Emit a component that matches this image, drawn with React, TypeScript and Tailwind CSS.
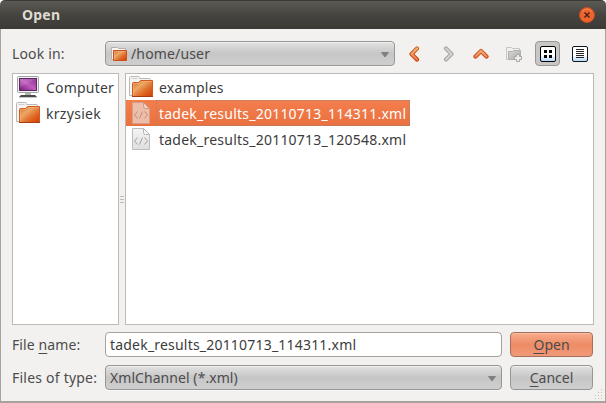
import type { ReactNode } from "react";

function Gradients() {
  return (
    <svg width="0" height="0" className="absolute" aria-hidden="true">
      <defs>
        <linearGradient id="folder" x1="0" y1="0" x2="1" y2="1">
          <stop offset="0" stopColor="#d0661c" />
          <stop offset="0.35" stopColor="#eba868" />
          <stop offset="0.65" stopColor="#e06a26" />
          <stop offset="1" stopColor="#d23c08" />
        </linearGradient>
        <linearGradient id="screen" x1="0" y1="1" x2="1" y2="0">
          <stop offset="0" stopColor="#741a74" />
          <stop offset="0.5" stopColor="#c05cc0" />
          <stop offset="1" stopColor="#8a3490" />
        </linearGradient>
        <linearGradient id="paper" x1="0" y1="0" x2="0" y2="1">
          <stop offset="0" stopColor="#f4f4f4" />
          <stop offset="1" stopColor="#dedede" />
        </linearGradient>
        <linearGradient id="arrow" gradientUnits="userSpaceOnUse" x1="0" y1="0" x2="0" y2="16">
          <stop offset="0" stopColor="#f3c696" />
          <stop offset="1" stopColor="#f0743a" />
        </linearGradient>
        <linearGradient id="arrowEdge" gradientUnits="userSpaceOnUse" x1="0" y1="0" x2="0" y2="16">
          <stop offset="0" stopColor="#cc7030" />
          <stop offset="1" stopColor="#d0340a" />
        </linearGradient>
        <linearGradient id="tile" x1="0" y1="0" x2="0" y2="1">
          <stop offset="0.55" stopColor="#ffffff" />
          <stop offset="1" stopColor="#b4d8fa" />
        </linearGradient>
        <linearGradient id="grayFolder" x1="0" y1="0" x2="1" y2="1">
          <stop offset="0" stopColor="#d8d8d8" />
          <stop offset="1" stopColor="#a8a8a8" />
        </linearGradient>
      </defs>
    </svg>
  );
}

function FolderIcon() {
  return (
    <svg width="24" height="24" viewBox="0 0 24 24" className="shrink-0">
      <path d="M.5 20.500V2.500q0-1 1-1h8q1 0 1 1v1h10q1 0 1 1v16z" fill="#f6f4f2" stroke="#bbb7b3" />
      <path d="M2.500 3.500h6" stroke="#d0cdca" />
      <path d="M3.500 21.500V8.500q0-1 1-1h5l2-2h12v16z" fill="url(#folder)" stroke="#d35a20" />
      <path d="M4.500 20.500V8.500H10l2-2h10.500" fill="none" stroke="#f2b27c" strokeOpacity=".6" />
      <path d="M3 21.500h21" stroke="#a83c12" />
    </svg>
  );
}

function SmallFolderIcon() {
  return (
    <svg width="16" height="16" viewBox="0 0 16 16" className="shrink-0">
      <path d="M.5 13.500V1.500h6l1 1h7v11z" fill="#f6f4f2" stroke="#b5b1ad" />
      <path d="M2.500 14.500v-10h13v10z" fill="url(#folder)" stroke="#c9501c" />
      <path d="M3.500 13.500v-8h11" fill="none" stroke="#f2b27c" strokeOpacity=".6" />
    </svg>
  );
}

function ComputerIcon() {
  return (
    <svg width="24" height="24" viewBox="0 0 24 24" className="shrink-0">
      <rect x="1.500" y="1.500" width="21" height="16" rx="1" fill="#f0f0ee" stroke="#a3a3a0" />
      <rect x="3.500" y="3.500" width="17" height="12" fill="url(#screen)" stroke="#5b2860" />
      <path d="M4 4h16L4 12z" fill="#fff" opacity=".12" />
      <path d="M9 18h6v2H9z" fill="#b4b4b2" />
      <path d="M5 20h14l2 2H3z" fill="#4a4a48" />
      <path d="M3 22.500h18" stroke="#c9c9c7" />
    </svg>
  );
}

function XmlIcon({ selected = false }: { selected?: boolean }) {
  return (
    <svg width="24" height="24" viewBox="0 0 24 24" className="shrink-0">
      <path
        d="M3.500 1.500h11l6 6v15h-17z"
        fill={selected ? "#edbdaa" : "url(#paper)"}
        stroke={selected ? "#d3a08e" : "#bdbdbd"}
      />
      <path
        d="M14.500 1.500v4q0 2 2 2h4z"
        fill={selected ? "#f3cec0" : "#fafafa"}
        stroke={selected ? "#cf9a88" : "#b5b5b5"}
      />
      <path
        d="M8.500 10.500 5.500 14l3 3.500M15.500 10.500l3 3.500-3 3.500M13.500 10.500l-3 7"
        fill="none"
        stroke={selected ? "#c08f80" : "#a3a3a3"}
      />
    </svg>
  );
}

function Chevron({ d, disabled = false }: { d: string; disabled?: boolean }) {
  return (
    <svg width="16" height="16" viewBox="0 0 16 16" fill="none" strokeLinecap="round" strokeLinejoin="round">
      <path d={d} stroke={disabled ? "#a8a8a6" : "url(#arrowEdge)"} strokeWidth="4.200" />
      <path d={d} stroke={disabled ? "#d2d2d0" : "url(#arrow)"} strokeWidth="2" />
    </svg>
  );
}

function NewFolderIcon() {
  return (
    <svg width="16" height="16" viewBox="0 0 16 16">
      <path d="M.5 13.500V1.500h5l1 1h7v11z" fill="#f0f0ef" stroke="#c6c6c4" />
      <path d="M2.500 13.500v-8h4l1-1h7v9z" fill="url(#grayFolder)" stroke="#b0b0ae" />
      <path d="M10.500 8.500h3v2h2v3h-2v2h-3v-2h-2v-3h2z" fill="#ededec" stroke="#a6a6a4" />
    </svg>
  );
}

function GridIcon() {
  return (
    <svg width="16" height="16" viewBox="0 0 16 16">
      <rect x=".5" y=".5" width="15" height="15" rx="1.500" fill="url(#tile)" stroke="#000" />
      <path d="M4 4h3v3H4zM9 4h3v3H9zM4 9h3v3H4zM9 9h3v3H9z" fill="#000" />
    </svg>
  );
}

function ListIcon() {
  return (
    <svg width="16" height="16" viewBox="0 0 16 16">
      <rect x=".5" y=".5" width="15" height="15" rx="1.500" fill="url(#tile)" stroke="#10161c" />
      <path d="M4 3.500h8M4 5.500h8M4 7.500h8M4 9.500h8M4 11.500h8" stroke="#222" />
    </svg>
  );
}

function DropArrow() {
  return (
    <svg width="8" height="6" viewBox="0 0 8 6" className="mt-[3px] ml-auto">
      <path d="M.5.5h7L4 5z" fill="#7f7f7d" stroke="#6a6a68" strokeWidth=".6" />
    </svg>
  );
}

function Combo({ children, className }: { children: ReactNode; className: string }) {
  return (
    <div
      className={`flex h-[25px] items-center rounded-[4px] border border-[#969694] bg-linear-to-b from-[#e2e2e2] via-[#c6c6c6] to-[#cfcfcf] pr-[5px] text-[#4c4c4c] shadow-[inset_0_1px_0_#f0f0f0,0_1px_0_#fafafa] ${className}`}
    >
      {children}
      <DropArrow />
    </div>
  );
}

function Mnemonic({ children }: { children: ReactNode }) {
  return <span className="underline decoration-1 underline-offset-[3px]">{children}</span>;
}

export default function App() {
  return (
    <div className="flex h-[403px] w-[606px] flex-col overflow-hidden bg-white font-['Noto_Sans','Open_Sans',sans-serif] text-[14px] leading-[20px] text-[#4c4c4c]">
      <Gradients />
      <header className="flex h-[29px] shrink-0 items-center justify-between rounded-t-[5px] border-t border-[#3c3b37] bg-linear-to-b from-[#5b5a54] via-[#45443f] to-[#3b3a36] pr-[11px] pl-[22px]">
        <span className="text-[14px] font-bold tracking-[0.2px] text-[#dfdbd2]">Open</span>
        <svg width="16" height="16" viewBox="0 0 16 16">
          <circle cx="8" cy="8" r="7.500" fill="#ee642c" stroke="#c74e20" />
          <path d="M3 4.500Q8-.5 13 4.500" fill="none" stroke="#f8a078" strokeOpacity=".6" />
          <path d="m5.500 5.500 5 5m0-5-5 5" stroke="#4a2418" strokeWidth="1.500" />
        </svg>
      </header>

      <main className="flex flex-1 flex-col border-x border-b-2 border-[#a8a29c] bg-[#f2f1f0] px-[11px] pt-[12px]">
        <div className="flex h-[25px] shrink-0 items-center">
          <span className="w-[93px] tracking-[0.15px]">Look in:</span>
          <Combo className="w-[290px] pl-[5px]">
            <SmallFolderIcon />
            <span className="ml-[4px] tracking-[0.15px]">/home/user</span>
          </Combo>
          <div className="ml-[12px] flex items-center gap-[17px]">
            <Chevron d="M10 2.500 4.500 8l5.500 5.500" />
            <Chevron d="M6 2.500 11.500 8 6 13.500" disabled />
            <Chevron d="M2.500 10.500 8 5l5.500 5.500" />
            <NewFolderIcon />
          </div>
          <div className="ml-[13px] flex h-[25px] w-[25px] items-center justify-center rounded-[4px] border border-[#979795] bg-[#c8c7c6]">
            <GridIcon />
          </div>
          <div className="ml-[12px]">
            <ListIcon />
          </div>
        </div>

        <div className="mt-[7px] flex h-[252px] shrink-0 text-[#3c3c3c]">
          <aside className="w-[107px] border border-[#bcb9b6] bg-white pl-[3px]">
            <div className="flex h-[26px] items-center gap-[6px]">
              <ComputerIcon />
              <span className="pt-[2px] tracking-[0.2px]">Computer</span>
            </div>
            <div className="flex h-[26px] items-center gap-[6px]">
              <FolderIcon />
              <span className="pt-[2px] tracking-[0.3px]">krzysiek</span>
            </div>
          </aside>
          <div className="flex w-[6px] flex-col items-center justify-center gap-[2px]">
            <i className="h-px w-[4px] bg-[#bdbab7]" />
            <i className="h-px w-[4px] bg-[#bdbab7]" />
            <i className="h-px w-[4px] bg-[#bdbab7]" />
          </div>
          <section className="w-[469px] border border-[#bcb9b6] bg-white">
            <div className="flex h-[26px] items-center pl-[3px]">
              <FolderIcon />
              <span className="ml-[6px] pt-[2px] tracking-[0.25px]">examples</span>
            </div>
            <div className="flex h-[26px] w-[284px] items-center bg-linear-to-b from-[#f37e4d] to-[#ea703f] pl-[3px] text-white">
              <XmlIcon selected />
              <span className="ml-[3px] flex h-[26px] flex-1 items-center border border-dotted border-[#a5846c] pt-[2px] pl-[2px] tracking-[0.23px] whitespace-nowrap">
                tadek_results_20110713_114311.xml
              </span>
            </div>
            <div className="flex h-[26px] items-center pl-[3px]">
              <XmlIcon />
              <span className="ml-[6px] pt-[2px] tracking-[0.23px]">tadek_results_20110713_120548.xml</span>
            </div>
          </section>
        </div>

        <div className="mt-[7px] flex h-[25px] shrink-0 items-center">
          <span className="w-[93px] tracking-[0.1px]">
            File <Mnemonic>n</Mnemonic>ame:
          </span>
          <div className="flex h-[25px] w-[397px] items-center rounded-[4px] border border-[#a5a19d] bg-white pl-[4px] tracking-[0.2px] text-[#3c3c3c]">
            tadek_results_20110713_114311.xml
          </div>
          <button className="ml-[8px] h-[25px] w-[83px] rounded-[4px] border border-[#a2705c] bg-linear-to-b from-[#f8ab8b] via-[#ee8c66] to-[#f09a78] shadow-[inset_0_1px_0_#fabfa5]">
            <Mnemonic>O</Mnemonic>pen
          </button>
        </div>
        <div className="mt-[8px] flex h-[25px] shrink-0 items-center">
          <span className="w-[93px] tracking-[0.22px] whitespace-nowrap">Files of type:</span>
          <Combo className="w-[397px] pl-[4px]">
            <span className="tracking-[0.06px]">XmlChannel (*.xml)</span>
          </Combo>
          <button className="ml-[8px] h-[25px] w-[83px] rounded-[4px] border border-[#969694] bg-linear-to-b from-[#e2e2e2] via-[#c6c6c6] to-[#cfcfcf] shadow-[inset_0_1px_0_#f0f0f0]">
            <Mnemonic>C</Mnemonic>ancel
          </button>
        </div>
        <svg width="10" height="11" viewBox="0 0 10 11" className="-mt-px -mr-[9px] ml-auto">
          <path
            d="M8 0h1v1H8zM5 3h1v1H5zM8 3h1v1H8zM2 6h1v1H2zM5 6h1v1H5zM8 6h1v1H8zM-1 9h1v1h-1zM2 9h1v1H2zM5 9h1v1H5zM8 9h1v1H8z"
            fill="#c4c0bc"
          />
        </svg>
      </main>
    </div>
  );
}
